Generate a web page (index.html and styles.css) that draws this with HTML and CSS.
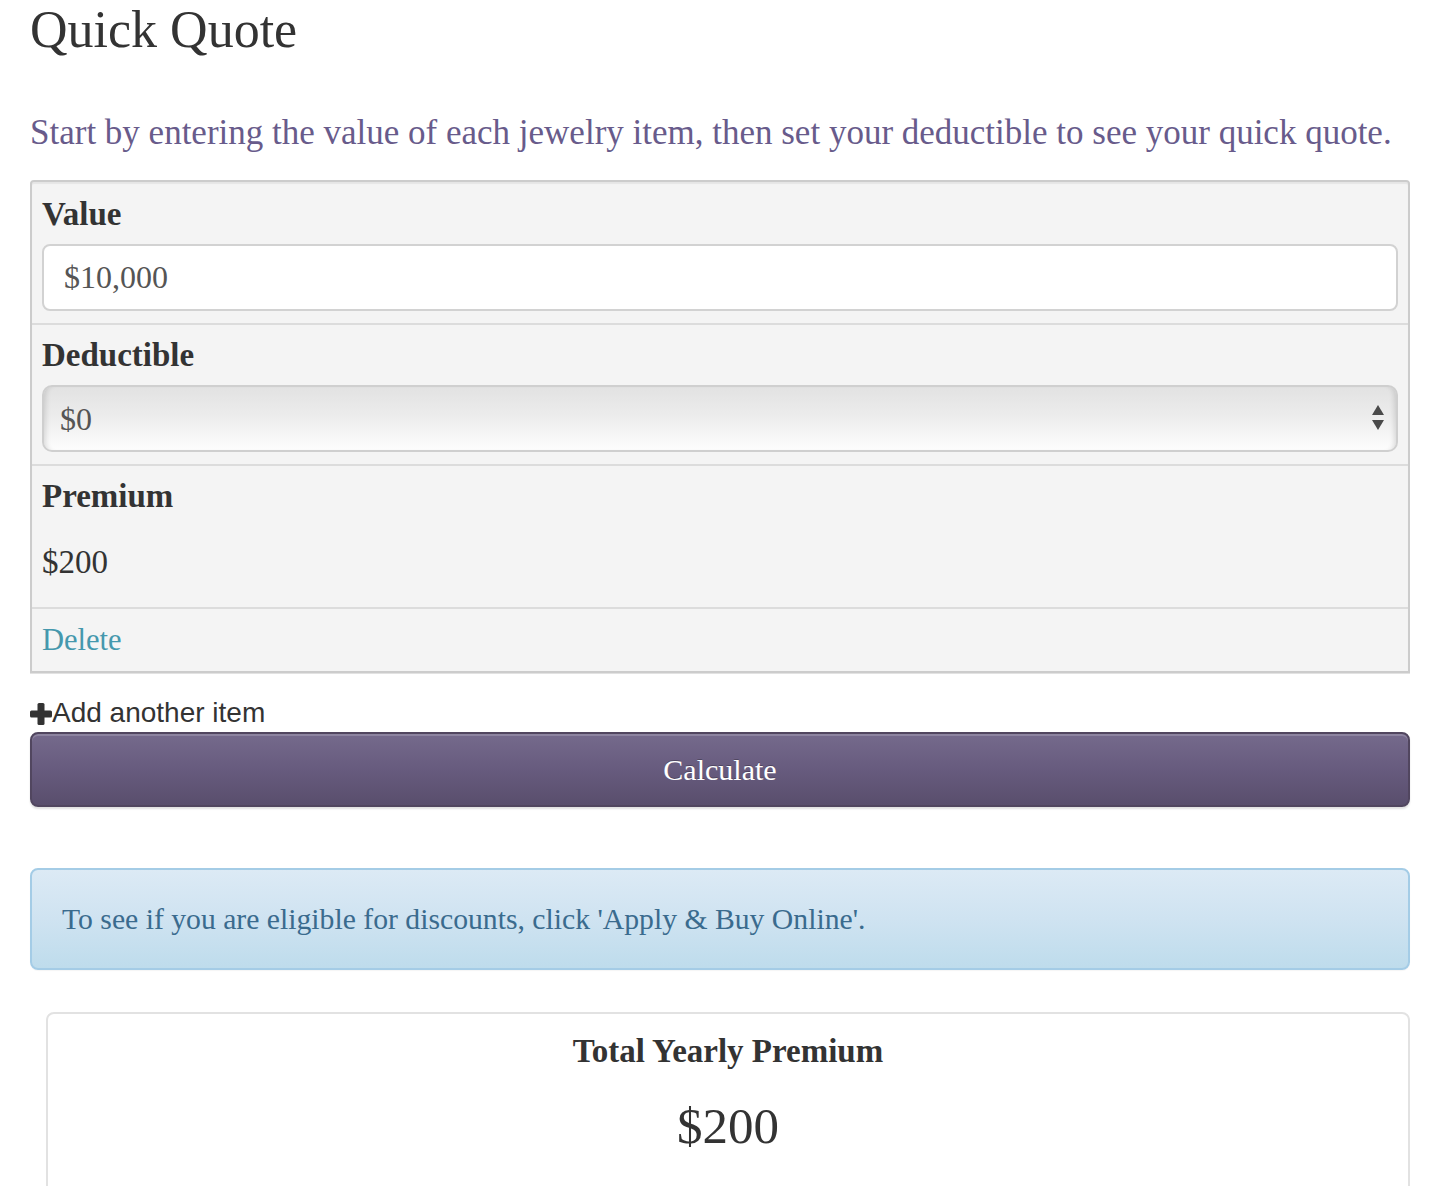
FILE: index.html
```html
<!DOCTYPE html>
<html lang="en">
<head>
<meta charset="utf-8">
<title>Quick Quote</title>
<link rel="stylesheet" href="styles.css">
</head>
<body>
<div class="page">
  <h1 class="title">Quick Quote</h1>
  <p class="lead">Start by entering the value of each jewelry item, then set your deductible to see your quick quote.</p>

  <div class="item-panel">
    <div class="field">
      <label class="field-label" for="value">Value</label>
      <input class="text-input" id="value" type="text" value="$10,000">
    </div>
    <div class="field">
      <label class="field-label" for="deductible">Deductible</label>
      <div class="select-wrap">
        <select class="select-input" id="deductible">
          <option>$0</option>
        </select>
        <svg class="select-arrows" width="14" height="26" viewBox="0 0 14 26" aria-hidden="true">
          <polygon points="7,0 13,10 1,10" fill="#4a4a4a"/>
          <polygon points="1,15 13,15 7,25" fill="#4a4a4a"/>
        </svg>
      </div>
    </div>
    <div class="field">
      <div class="field-label">Premium</div>
      <div class="amount">$200</div>
    </div>
    <div class="field field-last">
      <a class="delete-link" href="#">Delete</a>
    </div>
  </div>

  <a class="add-item" href="#">
    <svg class="plus-icon" width="22" height="22" viewBox="0 0 22 22" aria-hidden="true">
      <rect x="7.5" y="0" width="7" height="22" rx="1.5" fill="#333"/>
      <rect x="0" y="7.5" width="22" height="7" rx="1.5" fill="#333"/>
    </svg><span>Add another item</span>
  </a>

  <button class="calc-btn" type="button">Calculate</button>

  <div class="info-alert">To see if you are eligible for discounts, click 'Apply &amp; Buy Online'.</div>

  <div class="total-box">
    <div class="total-title">Total Yearly Premium</div>
    <div class="total-amount">$200</div>
  </div>
</div>
</body>
</html>
```

FILE: styles.css
```css
html, body {
  margin: 0;
  padding: 0;
  background: #ffffff;
}

body {
  font-family: "Liberation Serif", "Times New Roman", serif;
  color: #333333;
}

.page {
  margin: 0 22px 0 30px;
}

.title {
  margin: 0;
  font-size: 52px;
  line-height: 60px;
  font-weight: normal;
  color: #333333;
}

.lead {
  margin: 49px 0 23px;
  font-size: 35px;
  line-height: 48px;
  color: #685b8b;
  white-space: nowrap;
}

.item-panel {
  background: #f4f4f4;
  border: 2px solid #cccccc;
  border-radius: 4px 4px 0 0;
  padding-top: 2px;
  box-shadow: inset 0 2px 1px rgba(0, 0, 0, 0.06), 0 1px 0 #e2e2e2;
}

.field {
  padding: 10px 10px 12px;
  border-bottom: 2px solid #dcdcdc;
}

.field-last {
  border-bottom: none;
}

.field-label {
  display: block;
  font-size: 33px;
  line-height: 40px;
  font-weight: bold;
  color: #333333;
  margin-bottom: 10px;
}

.text-input {
  display: block;
  box-sizing: border-box;
  width: 100%;
  height: 67px;
  margin: 0;
  padding: 0 20px;
  border: 2px solid #d2d2d2;
  border-radius: 8px;
  background: #ffffff;
  font-family: "Liberation Serif", "Times New Roman", serif;
  font-size: 32px;
  color: #555555;
  outline: none;
}

.select-wrap {
  position: relative;
}

.select-input {
  display: block;
  box-sizing: border-box;
  width: 100%;
  height: 67px;
  margin: 0;
  padding: 0 16px;
  border: 2px solid #cfcfcf;
  border-radius: 10px;
  -webkit-appearance: none;
  appearance: none;
  background: linear-gradient(#e2e2e2 0%, #ececec 45%, #fdfdfd 100%);
  box-shadow: inset 6px 0 5px -4px rgba(0, 0, 0, 0.12), inset -6px 0 5px -4px rgba(0, 0, 0, 0.12);
  font-family: "Liberation Serif", "Times New Roman", serif;
  font-size: 32px;
  color: #555555;
  outline: none;
}

.select-arrows {
  position: absolute;
  right: 13px;
  top: 20px;
  pointer-events: none;
}

.amount {
  font-size: 33px;
  line-height: 40px;
  margin: 26px 0 13px;
  color: #333333;
}

.delete-link {
  display: block;
  font-size: 30.5px;
  line-height: 40px;
  padding-top: 1px;
  margin-bottom: -1px;
  color: #4598ad;
  text-decoration: none;
}

.add-item {
  display: flex;
  align-items: center;
  margin-top: 22px;
  height: 36px;
  font-family: "Liberation Sans", Arial, sans-serif;
  font-size: 28px;
  line-height: 36px;
  color: #333333;
  text-decoration: none;
}

.plus-icon {
  flex: none;
  margin-top: 1px;
}

.calc-btn {
  display: block;
  box-sizing: border-box;
  width: 100%;
  height: 75px;
  margin: 1px 0 0;
  padding: 0;
  border: 2px solid #51465f;
  border-radius: 8px;
  background: linear-gradient(#756a8c 0%, #675b7e 50%, #594e6c 100%);
  box-shadow: inset 0 2px 0 rgba(255, 255, 255, 0.18), 0 2px 2px rgba(0, 0, 0, 0.12);
  font-family: "Liberation Serif", "Times New Roman", serif;
  font-size: 30px;
  color: #ffffff;
  text-shadow: 0 -1px 0 rgba(0, 0, 0, 0.25);
  cursor: pointer;
}

.info-alert {
  box-sizing: border-box;
  margin-top: 61px;
  padding: 29px 30px;
  border: 2px solid #a4cce6;
  border-radius: 8px;
  background: linear-gradient(#dceaf5 0%, #cfe3f1 50%, #bedcec 100%);
  font-size: 29.7px;
  line-height: 40px;
  color: #3a6b8e;
  box-shadow: 0 1px 1px rgba(0, 0, 0, 0.04);
}

.total-box {
  margin: 42px 0 0 16px;
  padding: 17px 20px 60px;
  border: 2px solid #e2e2e2;
  border-radius: 8px;
  background: #ffffff;
  text-align: center;
}

.total-title {
  font-size: 33px;
  line-height: 40px;
  font-weight: bold;
  color: #333333;
}

.total-amount {
  margin-top: 25px;
  font-size: 51px;
  line-height: 60px;
  color: #333333;
}
```
